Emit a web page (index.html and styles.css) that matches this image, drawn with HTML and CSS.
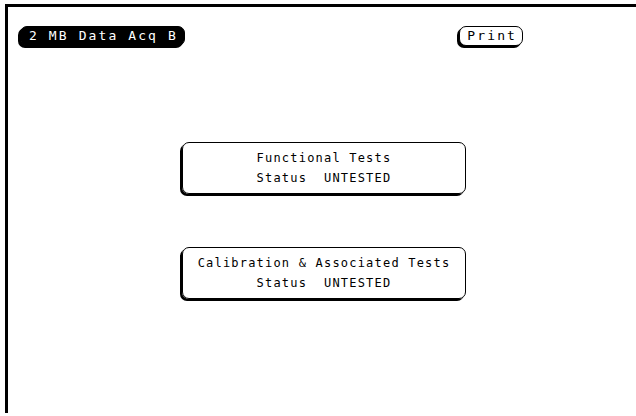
FILE: index.html
```html
<!DOCTYPE html>
<html>
<head>
<meta charset="utf-8">
<link rel="stylesheet" href="styles.css">
</head>
<body>
<div class="frame">
  <div class="header">
    <div class="btn btn-dark">2 MB Data Acq B</div>
    <div class="btn btn-light">Print</div>
  </div>
  <div class="boxes">
    <div class="box">
      <div class="line">Functional Tests</div>
      <div class="line">Status&nbsp;&nbsp;UNTESTED</div>
    </div>
    <div class="box">
      <div class="line">Calibration &amp; Associated Tests</div>
      <div class="line">Status&nbsp;&nbsp;UNTESTED</div>
    </div>
  </div>
</div>
</body>
</html>
```
FILE: styles.css
```css
html, body {
  margin: 0;
  padding: 0;
  background: #fff;
  width: 636px;
  height: 416px;
  overflow: hidden;
}
body {
  font-family: "DejaVu Sans Mono", "Liberation Mono", monospace;
  font-size: 12px;
  letter-spacing: 1.2px;
  color: #000;
}
.frame {
  margin: 4px 0 0 5px;
  border-top: 3px solid #000;
  border-left: 3px solid #000;
  height: 409px;
  box-sizing: border-box;
}
.header {
  display: flex;
  align-items: center;
  padding: 19px 0 0 12px;
}
.btn {
  height: 20px;
  line-height: 18px;
  border-radius: 7px;
  box-shadow: -2px 2px 0 #000;
  box-sizing: border-box;
  font-size: 13px;
  letter-spacing: 2.1px;
}
.btn-dark {
  background: #000;
  color: #fff;
  padding: 0 6px 0 8px;
  border: 1px solid #000;
}
.btn-light {
  background: #fff;
  border: 1px solid #000;
  padding: 0 5px 0 7px;
  margin-left: auto;
  margin-right: 113px;
}
.boxes {
  display: flex;
  flex-direction: column;
  align-items: flex-start;
  padding: 96px 0 0 174px;
  gap: 53px;
}
.box {
  width: 284px;
  height: 52px;
  box-sizing: border-box;
  border: 1px solid #000;
  border-radius: 7px;
  box-shadow: -2px 2px 0 #000;
  display: flex;
  flex-direction: column;
  align-items: center;
  justify-content: center;
  gap: 7px;
}
.line {
  line-height: 13px;
  white-space: pre;
}
```
